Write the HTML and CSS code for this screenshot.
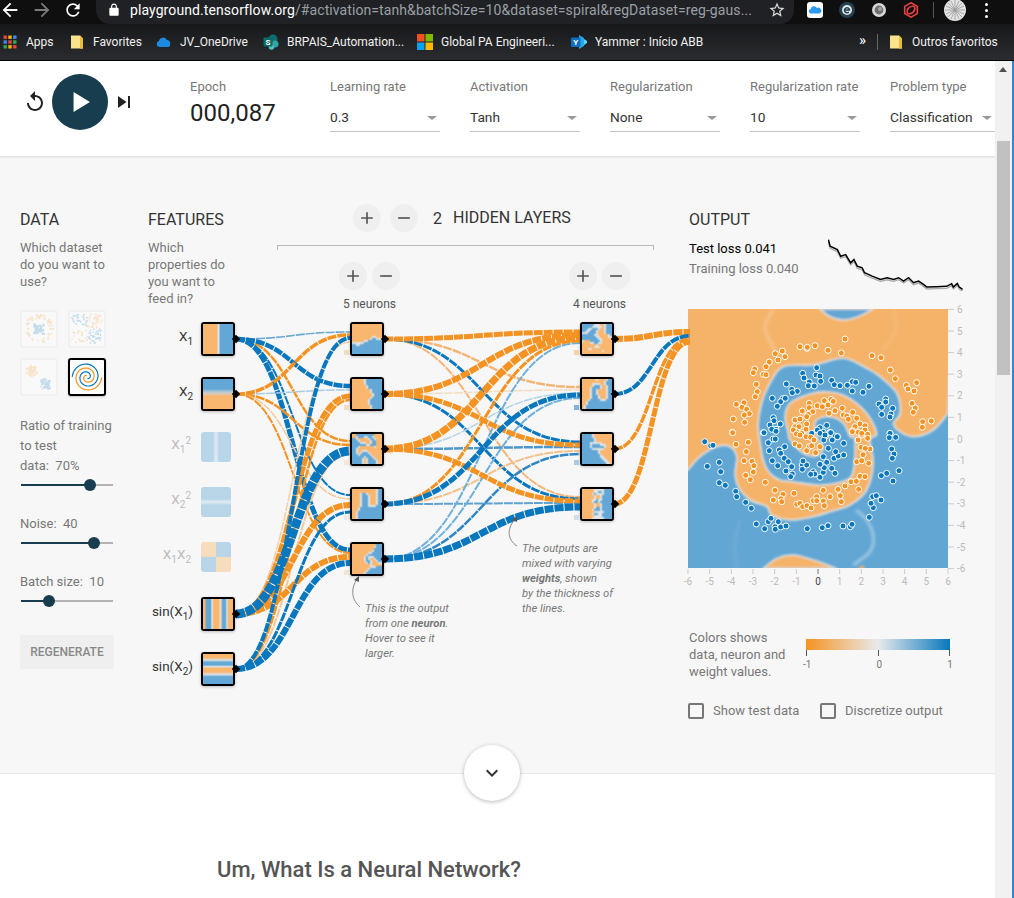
FILE: index.html
```html
<!DOCTYPE html>
<html lang="en">
<head>
<meta charset="utf-8">
<title>Tensorflow — Neural Network Playground</title>
<link rel="stylesheet" href="styles.css">
</head>
<body>
<div class="browser">
  <div class="toolbar">
    <svg class="tb-icon back" viewBox="0 0 24 24"><path d="M20 11H7.83l5.59-5.59L12 4l-8 8 8 8 1.41-1.41L7.83 13H20v-2z"/></svg>
    <svg class="tb-icon fwd" viewBox="0 0 24 24"><path d="M12 4l-1.41 1.41L16.17 11H4v2h12.17l-5.58 5.59L12 20l8-8z"/></svg>
    <svg class="tb-icon reload" viewBox="0 0 24 24"><path d="M17.65 6.35A7.958 7.958 0 0012 4c-4.42 0-7.99 3.58-7.99 8s3.57 8 7.99 8c3.73 0 6.84-2.55 7.73-6h-2.08A5.99 5.99 0 0112 18c-3.31 0-6-2.69-6-6s2.69-6 6-6c1.66 0 3.14.69 4.22 1.78L13 11h7V4l-2.35 2.35z"/></svg>
    <div class="omnibox">
      <svg class="lock" viewBox="0 0 24 24"><path d="M18 8h-1V6c0-2.76-2.24-5-5-5S7 3.24 7 6v2H6c-1.1 0-2 .9-2 2v10c0 1.1.9 2 2 2h12c1.1 0 2-.9 2-2V10c0-1.1-.9-2-2-2zM9 6c0-1.66 1.34-3 3-3s3 1.34 3 3v2H9V6z"/></svg>
      <span class="url"><b>playground.tensorflow.org</b>/#activation=tanh&amp;batchSize=10&amp;dataset=spiral&amp;regDataset=reg-gaus...</span>
      <svg class="star" viewBox="0 0 24 24"><path d="M22 9.24l-7.19-.62L12 2 9.19 8.63 2 9.24l5.46 4.73L5.82 21 12 17.27 18.18 21l-1.63-7.03L22 9.24zM12 15.4l-3.76 2.27 1-4.28-3.32-2.88 4.38-.38L12 6.1l1.71 4.04 4.38.38-3.32 2.88 1 4.28L12 15.4z"/></svg>
    </div>
    <div class="extensions">
      <svg class="ext" viewBox="0 0 16 16"><rect width="16" height="16" rx="3" fill="#fff"/><path d="M3.5 11.5a2.3 2.3 0 0 1 .2-4.5 3.4 3.4 0 0 1 6.3-1 2.8 2.8 0 0 1 2.5 5.5z" fill="#2f9bf0"/></svg>
      <svg class="ext" viewBox="0 0 16 16"><circle cx="8" cy="8" r="8" fill="#25404f"/><circle cx="8" cy="8" r="5" fill="#dfe6ea"/><path d="M5.5 8h5a2.5 2.5 0 1 0-.7 2" fill="none" stroke="#25404f" stroke-width="1.5"/></svg>
      <svg class="ext" viewBox="0 0 16 16"><circle cx="8" cy="8" r="7" fill="#d8d8d8"/><circle cx="8" cy="8" r="4.4" fill="#6d6d6d"/><circle cx="9" cy="7" r="2" fill="#a5a5a5"/></svg>
      <svg class="ext" viewBox="0 0 16 16"><g fill="none" stroke="#e8413f" stroke-width="1.6"><path d="M8 .8l6.3 3.6v7.200L8 15.200l-6.300-3.600V4.400z"/><path d="M4.500 11.500C3 7 7 3.500 11.500 4.500M11.500 4.500C13 9 9 12.500 4.500 11.500"/></g></svg>
      <span class="ext-sep"></span>
      <svg class="avatar" viewBox="0 0 22 22"><circle cx="11" cy="11" r="11" fill="#e3e3e3"/><g stroke="#9a9a9a" stroke-width=".8"><path d="M11 1v20M1 11h20M4 4l14 14M18 4L4 18M7 2l8 18M15 2L7 20M2 7l18 8M20 7L2 15"/></g></svg>
      <span class="menu-dots"><i></i><i></i><i></i></span>
    </div>
  </div>
  <div class="bookmarks">
    <div class="bm bm-apps"><svg class="bm-ic" viewBox="0 0 16 16"><g id="appsgrid"><rect x="1.5" y="1.5" width="3.4" height="3.4" fill="#e8453c"/><rect x="6.3" y="1.5" width="3.4" height="3.4" fill="#f4b400"/><rect x="11.1" y="1.5" width="3.4" height="3.4" fill="#4285f4"/><rect x="1.5" y="6.3" width="3.4" height="3.4" fill="#4285f4"/><rect x="6.3" y="6.3" width="3.4" height="3.4" fill="#e8453c"/><rect x="11.1" y="6.3" width="3.4" height="3.4" fill="#34a853"/><rect x="1.5" y="11.1" width="3.4" height="3.4" fill="#34a853"/><rect x="6.3" y="11.1" width="3.4" height="3.4" fill="#f4b400"/><rect x="11.1" y="11.1" width="3.4" height="3.4" fill="#e8453c"/></g></svg>Apps</div>
    <div class="bm bm-fav"><svg class="bm-ic" viewBox="0 0 16 16"><path d="M2 1.5h9l3 3v10H2z" fill="#fbe28c"/><path d="M11 1.5v13h3v-10z" fill="#e9bd3c"/></svg>Favorites</div>
    <div class="bm bm-drive"><svg class="bm-ic" viewBox="0 0 16 16"><path d="M3.5 13a3 3 0 0 1-.6-5.9 4.2 4.2 0 0 1 7.9-1.2 3.6 3.6 0 0 1 3.4 3.6A3.5 3.5 0 0 1 12.500 13z" fill="#1b8be0"/></svg>JV_OneDrive</div>
    <div class="bm bm-sp"><svg class="bm-ic" viewBox="0 0 16 16"><circle cx="10" cy="5" r="4.500" fill="#0f6d6d"/><circle cx="12" cy="10" r="3.500" fill="#31a5a5"/><circle cx="8.500" cy="13" r="2.800" fill="#4fc3c3"/><rect x="0.500" y="3.500" width="9" height="9" rx="1" fill="#0b6a6a"/><text class="sp-s" x="5" y="11">S</text></svg>BRPAIS_Automation...</div>
    <div class="bm bm-ms"><svg class="bm-ic" viewBox="0 0 16 16"><rect width="7.500" height="7.500" fill="#f25022"/><rect x="8.500" width="7.500" height="7.500" fill="#7fba00"/><rect y="8.500" width="7.500" height="7.500" fill="#00a4ef"/><rect x="8.500" y="8.500" width="7.500" height="7.500" fill="#ffb900"/></svg>Global PA Engineeri...</div>
    <div class="bm bm-yam"><svg class="bm-ic" viewBox="0 0 16 16"><path d="M8 1l5 3v8l-5 3z" fill="#28a8ea"/><path d="M13 5l3 2v2l-3 2z" fill="#50d9ff"/><rect y="3.500" width="9.500" height="9.500" rx="1" fill="#106ebe"/><text class="sp-s" x="4.700" y="11">Y</text></svg>Yammer : Início ABB</div>
    <div class="bm-right">
      <span class="chev-more">»</span>
      <span class="bm-sep"></span>
      <svg class="bm-ic" viewBox="0 0 16 16"><path d="M2 1.500h9l3 3v10H2z" fill="#fbe28c"/><path d="M11 1.500v13h3v-10z" fill="#e9bd3c"/></svg>
      <span class="bm-other">Outros favoritos</span>
    </div>
  </div>
</div>

<div class="viewport">
  <div class="page">
    <header class="controls">
      <div class="transport">
        <svg class="tr-icon" viewBox="0 0 24 24"><path d="M12 5V1L7 6l5 5V7c3.310 0 6 2.690 6 6s-2.690 6-6 6-6-2.690-6-6H4c0 4.420 3.580 8 8 8s8-3.580 8-8-3.580-8-8-8z"/></svg>
        <div class="play"><svg viewBox="0 0 24 24"><path d="M6.500 3.500v17l14-8.500z"/></svg></div>
        <svg class="tr-icon" viewBox="0 0 24 24"><path d="M6 18l8.500-6L6 6v12zM16 6v12h2V6h-2z"/></svg>
      </div>
      <div class="epoch"><div class="ctl-label">Epoch</div><div class="epoch-val">000,087</div></div>
      <div class="select"><div class="ctl-label">Learning rate</div><div class="select-val">0.3<i class="caret"></i></div></div>
      <div class="select"><div class="ctl-label">Activation</div><div class="select-val">Tanh<i class="caret"></i></div></div>
      <div class="select"><div class="ctl-label">Regularization</div><div class="select-val">None<i class="caret"></i></div></div>
      <div class="select"><div class="ctl-label">Regularization rate</div><div class="select-val">10<i class="caret"></i></div></div>
      <div class="select select-last"><div class="ctl-label">Problem type</div><div class="select-val">Classification<i class="caret"></i></div></div>
    </header>

    <main class="workspace">
      <section class="col-data">
        <h4>Data</h4>
        <p class="desc">Which dataset<br>do you want to<br>use?</p>
        <div class="datasets">
          <div class="dataset" id="ds-circle"></div>
          <div class="dataset" id="ds-xor"></div>
          <div class="dataset" id="ds-gauss"></div>
          <div class="dataset selected" id="ds-spiral"></div>
        </div>
        <div class="param first">Ratio of training<br>to test<br>data:&nbsp; 70%</div>
        <div class="slider"><span class="fill fill-ratio"></span><span class="thumb thumb-ratio"></span></div>
        <div class="param">Noise:&nbsp; 40</div>
        <div class="slider"><span class="fill fill-noise"></span><span class="thumb thumb-noise"></span></div>
        <div class="param">Batch size:&nbsp; 10</div>
        <div class="slider"><span class="fill fill-batch"></span><span class="thumb thumb-batch"></span></div>
        <button class="regen">REGENERATE</button>
      </section>

      <section class="col-net" id="net">
        <svg class="links" id="links" viewBox="148 156 547 616"></svg>
        <div class="col-features">
          <h4>Features</h4>
          <p class="desc">Which<br>properties do<br>you want to<br>feed in?</p>
        </div>
        <div class="col-hidden">
          <div class="hidden-head">
            <button class="round"><svg viewBox="0 0 24 24"><path d="M19 13h-6v6h-2v-6H5v-2h6V5h2v6h6v2z"/></svg></button>
            <button class="round"><svg viewBox="0 0 24 24"><path d="M19 13H5v-2h14v2z"/></svg></button>
            <span class="hl-num">2</span><span class="hl-txt">HIDDEN LAYERS</span>
          </div>
          <div class="bracket"></div>
          <div class="layers">
            <div class="layer">
              <div class="layer-btns">
                <button class="round"><svg viewBox="0 0 24 24"><path d="M19 13h-6v6h-2v-6H5v-2h6V5h2v6h6v2z"/></svg></button>
                <button class="round"><svg viewBox="0 0 24 24"><path d="M19 13H5v-2h14v2z"/></svg></button>
              </div>
              <div class="neurons">5 neurons</div>
            </div>
            <div class="layer">
              <div class="layer-btns">
                <button class="round"><svg viewBox="0 0 24 24"><path d="M19 13h-6v6h-2v-6H5v-2h6V5h2v6h6v2z"/></svg></button>
                <button class="round"><svg viewBox="0 0 24 24"><path d="M19 13H5v-2h14v2z"/></svg></button>
              </div>
              <div class="neurons">4 neurons</div>
            </div>
          </div>
        </div>
        <p class="note note-neuron">This is the output<br>from one <b>neuron</b>.<br>Hover to see it<br>larger.</p>
        <p class="note note-weights">The outputs are<br>mixed with varying<br><b>weights</b>, shown<br>by the thickness of<br>the lines.</p>
      </section>

      <section class="col-output">
        <h4>Output</h4>
        <div class="loss">
          <div class="loss-text">
            <div class="loss-test">Test loss 0.041</div>
            <div class="loss-train">Training loss 0.040</div>
          </div>
          <svg class="loss-chart" id="losschart" viewBox="443 120 405 160"></svg>
        </div>
        <svg class="heat" id="heat" viewBox="0 0 290 285"></svg>
        <div class="legend">
          <div class="legend-text">Colors shows<br>data, neuron and<br>weight values.</div>
          <div class="scale">
            <div class="scale-bar"></div>
            <div class="scale-ticks"><span>-1</span><span>0</span><span>1</span></div>
          </div>
        </div>
        <div class="checks">
          <label class="check"><i class="box"></i>Show test data</label>
          <label class="check"><i class="box"></i>Discretize output</label>
        </div>
      </section>
    </main>

    <section class="article">
      <button class="more"><svg viewBox="0 0 24 24"><path d="M7.410 8.590L12 13.170l4.590-4.580L18 10l-6 6-6-6z"/></svg></button>
      <h2>Um, What Is a Neural Network?</h2>
    </section>
  </div>
  <div class="scrollbar"><i class="sb-up"></i><i class="sb-thumb"></i></div>
</div>
<script src="script.js"></script>
</body>
</html>
```
FILE: styles.css
```css
* { box-sizing: border-box; }
html, body { margin: 0; height: 898px; overflow: hidden; }
body { font-family: Roboto, "Liberation Sans", sans-serif; color: #333; background: #fff; width: 1014px; }

/* browser chrome */
.browser { height: 61px; background: #202124; border-bottom: 1px solid #000; }
.toolbar { height: 24px; display: flex; align-items: flex-start; background: #0f0f10; }
.tb-icon { width: 22px; height: 22px; margin-top: -1px; fill: #fff; flex: none; }
.back { margin-left: -1px; }
.fwd { margin-left: 10px; fill: #7c7c7c; }
.reload { margin-left: 10px; width: 20px; height: 20px; margin-top: 0; }
.omnibox { margin-left: 13px; width: 698px; height: 24px; background: #202124; border-radius: 0 0 14px 14px; display: flex; align-items: center; padding: 0 8px 4px 11px; flex: none; }
.lock { width: 14px; height: 14px; fill: #fff; flex: none; }
.url { margin-left: 9px; font-size: 14px; color: #9aa0a6; white-space: nowrap; letter-spacing: .09px; flex: 1; overflow: hidden; }
.url b { color: #fff; font-weight: 400; }
.star { width: 18px; height: 18px; fill: #ddd; flex: none; }
.extensions { display: flex; align-items: center; height: 20px; padding-left: 13px; flex: 1; }
.ext { width: 16px; height: 16px; margin-right: 16px; flex: none; }
.ext-sep { width: 1px; height: 16px; background: #555; margin: 0 10px 0 -2px; }
.avatar { width: 22px; height: 22px; flex: none; }
.menu-dots { display: flex; flex-direction: column; gap: 3px; margin-left: 19px; }
.menu-dots i { width: 3px; height: 3px; background: #fff; border-radius: 50%; }

.bookmarks { height: 36px; display: flex; align-items: center; padding-left: 2px; background: linear-gradient(#17181a, #2b2c2f); font-size: 12px; color: #f1f1f1; }
.bm { display: flex; align-items: center; white-space: nowrap; flex: none; }
.bm-ic { width: 16px; height: 16px; flex: none; margin-right: 8px; }
.bm-apps { width: 67px; }
.bm-fav { width: 87px; }
.bm-drive { width: 107px; }
.bm-sp, .bm-ms { width: 154px; }
.bm-yam { width: 288px; }
.sp-s { font-size: 8px; font-weight: 700; fill: #fff; text-anchor: middle; }
.bm-right { display: flex; align-items: center; flex: none; }
.chev-more { width: 18px; font-size: 15px; color: #fff; line-height: 1; margin-top: -3px; }
.bm-sep { width: 1px; height: 16px; background: #666; margin-right: 10px; }
.bm-other { white-space: nowrap; }

/* page */
.viewport { display: flex; height: 837px; }
.page { width: 995px; flex: none; overflow: hidden; }
.scrollbar { flex: 1; position: relative; background: #f1f1f1; border-right: 2px solid #2b88d8; }
.sb-up { position: absolute; left: 4px; top: 6px; border: 4px solid transparent; border-top: 0; border-bottom: 5px solid #505050; }
.sb-thumb { position: absolute; left: 2px; top: 80px; width: 13px; height: 234px; background: #c1c1c1; }

.controls { height: 96px; display: flex; align-items: flex-start; padding: 17px 0 0 23px; background: #fff; border-bottom: 1px solid #e3e3e3; box-shadow: 0 1px 2px rgba(0,0,0,.06); position: relative; white-space: nowrap; overflow: hidden; }
.transport { display: flex; align-items: center; width: 167px; margin-top: -4px; flex: none; }
.tr-icon { width: 24px; height: 24px; fill: #222; flex: none; }
.play { width: 56px; height: 56px; border-radius: 50%; background: #183d4e; margin: 0 4px 0 5px; display: flex; align-items: center; justify-content: center; flex: none; }
.play svg { width: 28px; height: 28px; fill: #fff; }
.epoch { width: 140px; flex: none; }
.ctl-label { font-size: 13px; line-height: 17px; color: #777; }
.epoch-val { font-size: 24px; line-height: 28px; color: #222; margin-top: 4px; }
.select { width: 110px; margin-right: 30px; flex: none; }
.select-last { margin-right: 0; width: 105px; }
.select-val { position: relative; font-size: 13.7px; height: 28px; line-height: 26px; color: #333; margin-top: 9px; border-bottom: 1px solid #c4c4c4; }
.caret { position: absolute; right: 3px; top: 12px; border: 5px solid transparent; border-top: 4px solid #999; border-bottom: 0; }

.workspace { height: 617px; display: flex; background: #f7f7f7; padding: 53px 0 0 20px; border-bottom: 1px solid #e7e7e7; }
h4 { margin: 0; font-size: 16px; line-height: 19px; font-weight: 400; text-transform: uppercase; color: #333; }
.desc { margin: 10px 0 0; font-size: 13px; line-height: 17px; color: #777; }

.col-data { width: 128px; flex: none; }
.datasets { display: grid; grid-template-columns: 38px 38px; gap: 10px; margin-top: 20px; }
.dataset { width: 38px; height: 38px; background: #f9f9f9; border: 2px solid #f1f1f1; border-radius: 3px; }
.dataset svg { display: block; width: 100%; height: 100%; opacity: .22; }
.dataset.selected { border-color: #000; background: #fff; box-shadow: 0 1px 2px rgba(0,0,0,.2); }
.dataset.selected svg { opacity: 1; }
.param { font-size: 13px; line-height: 20px; color: #777; margin-top: 23px; }
.param.first { margin-top: 20px; }
.slider { position: relative; width: 92px; height: 12px; margin: 3px 0 0 1px; background: linear-gradient(#b3b3b3, #b3b3b3) center / 100% 2px no-repeat; }
.fill { position: absolute; left: 0; top: 5px; height: 2px; background: #183d4e; }
.thumb { position: absolute; top: 0; width: 12px; height: 12px; border-radius: 50%; background: #183d4e; }
.fill-ratio { width: 69px; } .thumb-ratio { left: 63px; }
.fill-noise { width: 73px; } .thumb-noise { left: 67px; }
.fill-batch { width: 28px; } .thumb-batch { left: 22px; }
.regen { display: block; margin-top: 28px; width: 94px; height: 34px; border: 0; border-radius: 3px; background: #efefef; color: #888; font: 500 12px Roboto, sans-serif; padding: 0; }

.col-net { width: 540px; flex: none; display: flex; position: relative; height: 560px; }
.links { position: absolute; left: 0; top: -54px; width: 547px; height: 616px; overflow: visible; }
.col-features { width: 129px; flex: none; position: relative; }
.col-hidden { width: 377px; flex: none; position: relative; margin-top: -6px; }
.hidden-head { display: flex; align-items: center; padding-left: 76px; height: 28px; }
.round { width: 28px; height: 28px; border: 0; border-radius: 50%; background: #efefef; padding: 4px; display: block; flex: none; }
.round svg { display: block; width: 20px; height: 20px; fill: #555; }
.hidden-head .round + .round { margin-left: 9px; }
.hl-num { margin-left: 15px; font-size: 16px; }
.hl-txt { margin-left: 11px; font-size: 16px; margin-top: -1px; }
.bracket { height: 5px; margin-top: 13px; border: 1px solid #bbb; border-bottom: 0; }
.layers { display: flex; margin-top: 12px; padding-left: 62px; }
.layer { width: 230px; flex: none; }
.layer-btns { display: flex; gap: 5px; width: 61px; }
.neurons { width: 61px; white-space: nowrap; display: flex; justify-content: center; font-size: 12px; line-height: 14px; color: #555; margin-top: 7px; }

.node { position: absolute; width: 34px; height: 34px; border: 2px solid #000; border-radius: 3px; background: #fff; box-shadow: 0 1px 3px rgba(0,0,0,.25); }
.node canvas { display: block; width: 30px; height: 30px; border-radius: 1px; }
.node::after { content: ""; position: absolute; right: -6px; top: 12px; width: 6px; height: 6px; background: #000; transform: rotate(45deg); }
.node.off { width: 30px; height: 30px; border: 0; box-shadow: none; background: none; }
.node.off::after { display: none; }
.thumbfill { width: 100%; height: 100%; border-radius: 1px; }
.node.off .thumbfill { border-radius: 3px; opacity: .42; }
.f-x1 { background: linear-gradient(90deg, #f9b66f 0 47%, #e8ddd0 50%, #dfe7ec 52%, #62a7d5 58% 100%); }
.f-x2 { background: linear-gradient(#62a7d5 0 32%, #bcc9d0 44%, #d9cdbb 50%, #f9b66f 56% 100%); }
.f-x1s { background: linear-gradient(90deg, #62a7d5 0 40%, #c5dcec 50%, #62a7d5 60% 100%); }
.f-x2s { background: linear-gradient(#62a7d5 0 40%, #c5dcec 50%, #62a7d5 60% 100%); }
.f-x1x2 { background: conic-gradient(#62a7d5 0 25%, #f9b66f 25% 50%, #62a7d5 50% 75%, #f9b66f 75% 100%); }
.f-s1 { background: linear-gradient(90deg, #f9b66f 0 5%, #62a7d5 12% 25%, #e2e6e6 30%, #f9b66f 36% 52%, #f3dfc3 58%, #62a7d5 66% 74%, #d5dfe4 80%, #f9b66f 86% 100%); }
.f-s2 { background: linear-gradient(#f9b66f 0 12%, #d9dfe2 20%, #62a7d5 28% 36%, #d9dfe2 42%, #f9b66f 48% 60%, #d9dfe2 68%, #62a7d5 76% 100%); }
.bias { position: absolute; left: -8px; bottom: -1px; width: 5px; height: 5px; }
.flabel { position: absolute; right: calc(100% + 10px); top: 50%; transform: translateY(calc(-50% - 3px)); font-size: 13.5px; line-height: 16px; color: #333; white-space: nowrap; }
.off .flabel { color: #bbb; }
.flabel sub, .flabel sup { font-size: 10px; line-height: 0; }

.note { position: absolute; margin: 0; font-size: 11.2px; line-height: 15px; font-style: italic; color: #777; white-space: nowrap; }
.note b { font-weight: 700; }
.note-neuron { left: 217px; top: 391px; }
.note-weights { left: 374px; top: 331px; }

.col-output { width: 307px; flex: none; padding-left: 1px; }
.loss { display: flex; height: 70px; margin-top: 10px; }
.loss-text { width: 139px; font-size: 13px; line-height: 20px; flex: none; }
.loss-test { color: #000; }
.loss-train { color: #777; }
.loss-chart { width: 135px; height: 53px; flex: none; fill: none; margin-top: -1px; }
.heat { display: block; width: 290px; height: 285px; margin-left: -1px; overflow: visible; }
.ax { font-size: 10px; fill: #bbb; font-family: Roboto, sans-serif; }
.ax.zero { fill: #444; }
.legend { display: flex; margin-top: 35px; }
.legend-text { width: 117px; font-size: 13px; line-height: 17px; color: #777; flex: none; }
.scale { width: 144px; margin-top: 10px; flex: none; }
.scale-bar { height: 11px; background: linear-gradient(90deg, #f59322, #e8eaeb 50%, #0877bd); }
.scale-ticks { display: flex; justify-content: space-between; font-size: 10px; line-height: 12px; color: #777; height: 20px; padding-top: 9px; margin: 0 -3px; background: linear-gradient(#555, #555) 3px 0 / 1px 6px no-repeat, linear-gradient(#555, #555) center 0 / 1px 6px no-repeat, linear-gradient(#555, #555) calc(100% - 3px) 0 / 1px 6px no-repeat; }
.checks { display: flex; margin-top: 23px; }
.check { display: flex; align-items: center; font-size: 13px; line-height: 16px; color: #777; width: 132px; flex: none; white-space: nowrap; }
.box { width: 16px; height: 16px; border: 2px solid #777; border-radius: 2px; margin-right: 9px; flex: none; margin-left: -1px; }

.article { position: relative; background: #fff; height: 125px; padding-top: 83px; }
.more { position: absolute; left: 464px; top: -29px; width: 56px; height: 56px; border: 0; border-radius: 50%; background: #fff; box-shadow: 0 1px 4px rgba(0,0,0,.28); padding: 16px; }
.more svg { display: block; width: 24px; height: 24px; fill: #333; }
.article h2 { margin: 0; width: 738px; text-align: center; font-size: 22px; line-height: 26px; font-weight: 500; color: #555; }
```
FILE: script.js
```js
(function () {
  var NS = 'http://www.w3.org/2000/svg';
  var B = '#0877bd', O = '#f59322';
  var OFILL = '#f5b36b', BFILL = '#62a6d4';

  function el(tag, attrs, parent) {
    var e = document.createElementNS(NS, tag);
    for (var k in attrs) e.setAttribute(k, attrs[k]);
    if (parent) parent.appendChild(e);
    return e;
  }
  function smooth(pts) {
    var d = 'M' + pts[0][0].toFixed(1) + ' ' + pts[0][1].toFixed(1);
    for (var i = 0; i < pts.length - 1; i++) {
      var p0 = pts[i - 1] || pts[i], p1 = pts[i], p2 = pts[i + 1], p3 = pts[i + 2] || p2;
      d += 'C' + (p1[0] + (p2[0] - p0[0]) / 6).toFixed(1) + ' ' + (p1[1] + (p2[1] - p0[1]) / 6).toFixed(1) + ' ' +
        (p2[0] - (p3[0] - p1[0]) / 6).toFixed(1) + ' ' + (p2[1] - (p3[1] - p1[1]) / 6).toFixed(1) + ' ' +
        p2[0].toFixed(1) + ' ' + p2[1].toFixed(1);
    }
    return d;
  }

  /* ---------- network links ---------- */
  var links = document.getElementById('links');
  function link(x1, y1, x2, y2, color, w) {
    var mx = (x1 + x2) / 2;
    el('path', {
      d: 'M' + x1 + ' ' + y1 + 'C' + mx + ' ' + y1 + ' ' + mx + ' ' + y2 + ' ' + x2 + ' ' + y2,
      fill: 'none', stroke: color, 'stroke-width': w, 'stroke-dasharray': '9 1'
    }, links);
  }
  var S = { x1: 339, x2: 394, s1: 614, s2: 669 };
  [
    ['x1', 332, '#6aa9d4', 1.6], ['x1', 441, O, 2.5], ['x1', 495, B, 2], ['x1', 386, B, 4.5], ['x1', 550, B, 5],
    ['x2', 390, '#a9cbe2', 1.5], ['x2', 445, O, 2.5], ['x2', 499, '#f3c89b', 1.5], ['x2', 553, O, 2], ['x2', 335, O, 3.5],
    ['s1', 342, '#f3cfa6', 1.5], ['s2', 454, '#f3c89b', 2], ['s2', 400, O, 2.5],
    ['s1', 396, O, 5], ['s1', 505, O, 6], ['s1', 557, O, 6],
    ['s2', 512, B, 3], ['s2', 338, B, 4], ['s2', 563, B, 6], ['s1', 451, B, 9]
  ].forEach(function (l) { link(236, S[l[0]], 350, l[1], l[2], l[3]); });
  [
    [339, 387, '#f4b678', 2.5], [339, 497, '#f4b678', 2], [339, 442, B, 3],
    [394, 390, '#f3dcc2', 1.5], [394, 499, B, 3],
    [449, 393, '#b5d3e6', 1.5], [449, 447, '#4c97cb', 2.5],
    [504, 451, '#f4c08a', 2], [504, 503, '#5ea3d1', 2],
    [559, 343, '#6fb0db', 2], [559, 398, '#6fb0db', 2], [559, 454, '#2f86c2', 2.5],
    [504, 341, O, 3], [449, 501, O, 5], [394, 445, O, 5], [504, 395, B, 5],
    [339, 332, O, 5], [394, 335, O, 6], [449, 338, O, 7], [559, 507, B, 7]
  ].forEach(function (l) { link(384, l[0], 580, l[1], l[2], l[3]); });
  [[339, 332, O, 6], [394, 336, B, 4], [449, 339, O, 3.5], [504, 342, O, 5]].forEach(function (l) {
    link(614, l[0], 690, l[1], l[2], l[3]);
  });
  /* annotation arrows */
  function arrow(d, head) {
    el('path', { d: d, fill: 'none', stroke: '#888', 'stroke-width': 1 }, links);
    el('path', { d: head, fill: '#555' }, links);
  }
  arrow('M360 607C352 600 350 590 357 579', 'M359 576L354 580L359 582Z');
  arrow('M517 546C508 540 506 530 515 519', 'M517 516L512 520L517 522Z');

  /* ---------- nodes ---------- */
  var net = document.getElementById('net');
  function node(x, y, cls) {
    var n = document.createElement('div');
    n.className = 'node ' + (cls || '');
    n.style.left = (x - 148) + 'px';
    n.style.top = (y - 210) + 'px';
    net.appendChild(n);
    return n;
  }
  function label(n, html) {
    var l = document.createElement('div');
    l.className = 'flabel';
    l.innerHTML = html;
    n.appendChild(l);
  }
  [
    [201, 322, 'f-x1', 'X<sub>1</sub>', 0], [201, 377, 'f-x2', 'X<sub>2</sub>', 0],
    [201, 432, 'f-x1s', 'X<sub>1</sub><sup>2</sup>', 1], [201, 487, 'f-x2s', 'X<sub>2</sub><sup>2</sup>', 1],
    [201, 542, 'f-x1x2', 'X<sub>1</sub>X<sub>2</sub>', 1],
    [201, 597, 'f-s1', 'sin(X<sub>1</sub>)', 0], [201, 652, 'f-s2', 'sin(X<sub>2</sub>)', 0]
  ].forEach(function (f) {
    var n = node(f[0], f[1], f[4] ? 'off' : '');
    var t = document.createElement('div');
    t.className = 'thumbfill ' + f[2];
    n.appendChild(t);
    label(n, f[3]);
  });

  var COL = { o: '#f9b66f', b: '#62a7d5', w: '#dfe5e8' };
  function bitmap(n, rows) {
    var c = document.createElement('canvas');
    c.width = 15; c.height = 15;
    var g = c.getContext('2d');
    rows.forEach(function (r, y) {
      for (var x = 0; x < 15; x++) {
        g.fillStyle = COL[r[x]] || COL.b;
        g.fillRect(x, y, 1, 1);
      }
    });
    n.appendChild(c);
  }
  function bias(n, color) {
    var b = document.createElement('i');
    b.className = 'bias';
    b.style.background = color;
    n.appendChild(b);
  }
  var hidden = [
    [350, 322, '#f0dcc0', ['ooooooooooooooo','ooooooooooooooo','ooooooooooooooo','ooooooooooooooo','ooooooooooooooo','ooooooooooooooo','oooooooooowwooo','ooooooooowbbwww','oooooowwbbbbbbb','wwwwwwbbbbbbbbb','bbwwbbbbbbbbbbb','bbbbbbbbbbbbbbb','bbbbbbbbbbbbbbb','bbbbbbbbbbbbbbb','bbbbbbbbbbbbbbb']],
    [350, 377, '#f0dcc0', ['oooooowbbbbbbbb','oooooowbbbbbbbb','oooooowbbbbbbbb','ooooooowbbbbbbb','ooooooowbbbbbbb','ooooooooowbbbbb','ooooooooowbbbbb','oooooooooowbbbb','oooooooooowbbbb','ooooooooowbbbbb','oooooooowbbbbbb','oooooooowbbbbbb','oooooooowbbbbbb','ooooooooowbbbbb','ooooooooowbbbbb']],
    [350, 432, '#f2e6d8', ['oobbbbbbbbboooo','oowbbbwwbbwoooo','bbwooooowbbwooo','bbbwooooowbbooo','bbbbwwwoowbbooo','bbbbbbbwwbbbooo','bbbwooooooowooo','bbwoooooooooooo','bbwoowwwooooooo','bbwowbbbwoooooo','bbbwbbbbbwooooo','bbbbbbwbbbwoooo','bbbbbwowbbbwooo','bbbbbwowbbbbwoo','bbbbbwowbbbbwoo']],
    [350, 487, '#ebebe8', ['oooooooooooowbb','oooooooooooowbb','oooowbbwoooowbb','oooowbbbwooowbb','oooowbbbwooowbb','oooowbbbwooowbb','oooowbbbwooowbb','oooowbbbwooowbb','oooowbbbwwwwbbb','ooowbbbbbbbbbbb','ooowbbbbbbbbbbb','oowbbbbbbbbbbbb','oowbbbbbbbbbbbb','oowbbbbbbbbbbbb','oowbbbbbbbbbbbb']],
    [350, 542, '#f0e4d4', ['oooooooooooobbb','ooooooooooowbbb','ooooooooooobbbb','oooooooooowbbbb','oooooooowwbbbbb','ooooooowbbbbbbb','oooooowbwwwbbbb','oooooowbwoowbbb','oooooowbbwoowbb','ooooooowbwoooww','ooooooooowooooo','ooooooooowwwbbb','oooooooowbbbbbb','ooooooowbbbbbbb','oooooowbbbbbbbb']],
    [580, 322, '#f3d2a8', ['bbbbbbwwwoowbbb','bbbbbwwwwwowbbb','bbbwwbbbwoowbbb','bbwwbbbwooowbbb','wwwbbbbwooowbbb','bbbbbbwwooooowb','bbbbbbbwwooooww','bbbbbbbbwwooooo','wooobbbbbwooooo','oooowwbbwwooooo','ooooooowooooooo','oooooowwwoooooo','ooowwoooooooooo','oooooooooowoooo','ooooooooooooooo']],
    [580, 377, '#7fb5da', ['ooooooowoooowbb','ooooooooooowbbb','ooooowwwwoowbbb','ooooowbbbwoowbb','oooowbbbbwoowbb','oooowbbwoooowbb','oooowbbwoooowbb','oooowbbwoooowbb','oooowbbbwooowbb','oooowbbbwooowbb','ooowbbbbbwwwbbb','oowbbbbbbbbbbbb','oowbbbbbbbbbbbb','owbbbbbbbbbbbbb','owbbbbbbbbbbbbb']],
    [580, 432, '#a8cbe2', ['bbbbbwooooooooo','bbbbbwooooooooo','bbbbbbwoooooooo','bbbbbbwoooooooo','bbbbwwwwwwooooo','bbbbwbbbbwwwooo','bbbbwbbbbbbwooo','bbbbbwwwwwwoooo','bbbbbbbbwoooooo','bbbbbbbbwoooooo','bbbbbbbbbwooooo','bbbbbbbbbwwoooo','bbbbbbbbbbwwooo','bbbbbbbbbbbwwoo','bbbbbbbbbbbbwwo']],
    [580, 487, '#cfe0ec', ['oooooowwwwwbbbb','oooooowwbbwbbbb','ooooowbwwwwbbbb','oooooowoowbbbbb','oooooowoowbbbbb','ooooowwbwwbbbbb','ooooowbbwbbbbbb','oooooowoowbbbbb','oooooowoowbbbbb','oooooowbbwbbbbb','ooooowbbbwbbbbb','oooooowwwwwbbbb','ooooowbbwwbbbbb','oooooowwwwbbbbb','ooooowwwwwwbbbb']]
  ];
  hidden.forEach(function (h) {
    var n = node(h[0], h[1]);
    bitmap(n, h[3]);
    bias(n, h[2]);
  });

  /* ---------- output heatmap ---------- */
  var heat = document.getElementById('heat');
  function z8(p) { return [p[0] / 3 - 8, p[1] / 3 - 109]; }
  function z9(p) { return [p[0] / 3 - 8, p[1] / 3 + 121]; }
  var edge = [].concat(
    [[24,120],[60,80],[110,50],[150,50],[170,80],[165,130],[175,170],[210,210],[260,230],[275,255],[330,270],[400,260],[450,245],[510,225],[560,180],[580,100],[570,30]].map(z9),
    [[590,700],[560,640],[500,590],[440,575],[380,585],[330,610],[315,650],[325,700]].map(z8),
    [[330,30],[370,70],[410,78],[430,55],[415,30]].map(z9),
    [[405,690],[410,660],[450,650],[490,670],[510,710]].map(z8),
    [[522,20],[525,60],[520,120],[500,150],[420,165],[340,155],[300,150],[270,130],[250,90],[238,20]].map(z9),
    [[235,670],[245,610],[270,550],[310,500],[400,495],[490,475],[560,505],[600,530],[650,580],[660,640],[640,670],[660,695],[700,710],[760,690],[804,640]].map(z8)
  );
  var defs = el('defs', {}, heat);
  var cp = el('clipPath', { id: 'hc' }, defs);
  el('rect', { x: 0, y: 0, width: 260, height: 259 }, cp);
  var fl = el('filter', { id: 'soft', x: '-5%', y: '-5%', width: '110%', height: '110%' }, defs);
  el('feGaussianBlur', { stdDeviation: 1 }, fl);
  var fl2 = el('filter', { id: 'softer', x: '-20%', y: '-20%', width: '140%', height: '140%' }, defs);
  el('feGaussianBlur', { stdDeviation: 1.6 }, fl2);

  var clip = el('g', { 'clip-path': 'url(#hc)' }, heat);
  el('rect', { x: 0, y: 0, width: 260, height: 259, fill: BFILL }, clip);
  var sg = el('g', { filter: 'url(#soft)' }, clip);
  el('path', { d: smooth(edge) + 'L265 -5L-5 -5L-5 ' + edge[0][1] + 'Z', fill: OFILL, stroke: '#e2e4e2', 'stroke-width': 1.6 }, sg);
  el('path', { d: smooth([[420,327],[450,350],[490,360],[535,350],[580,327]].map(z8)) + 'Z', fill: BFILL, stroke: '#e2e4e2', 'stroke-width': 1.4 }, sg);
  el('path', { d: smooth([[250,415],[290,385],[340,375],[400,390],[470,415]].map(z9)) + 'Z', fill: OFILL, stroke: '#e2e4e2', 'stroke-width': 1.4 }, sg);
  el('path', { d: 'M' + z9([530,415]).join(' ') + 'L' + z9([552,405]).join(' ') + 'L' + z9([552,418]).join(' ') + 'Z', fill: OFILL }, sg);
  var fg = el('g', { filter: 'url(#softer)', fill: 'none', stroke: '#fff' }, clip);
  el('path', { d: smooth([[528,240],[560,270],[580,320],[570,365],[520,405]].map(z9)), 'stroke-opacity': .38, 'stroke-width': 3 }, fg);
  el('path', { d: smooth([[280,327],[255,385],[290,460]].map(z8)), 'stroke-opacity': .22, 'stroke-width': 3 }, fg);
  el('path', { d: smooth([[640,327],[648,390],[610,450]].map(z8)), 'stroke-opacity': .08, 'stroke-width': 3 }, fg);
  el('path', { d: smooth([[180,270],[165,340],[170,415]].map(z9)), stroke: '#8fbddc', 'stroke-opacity': .3, 'stroke-width': 3 }, fg);

  var orange8 = [[495,417],[360,440],[381,445],[382,442],[405,437],[444,451],[484,459],[576,467],[603,473],[286,461],[307,453],[315,470],[294,480],[268,486],[258,500],[224,507],[220,518],[250,523],[258,524],[631,510],[646,536],[679,556],[710,548],[684,567],[702,573],[229,553],[232,575],[226,590],[169,613],[192,608],[186,622],[200,628],[208,641],[193,645],[194,667],[160,657],[157,697],[696,610],[706,624],[700,637],[728,665],[754,663],[727,682],[388,610],[433,602],[453,598],[460,604],[412,617],[427,620],[444,615],[388,623],[367,633],[398,635],[385,643],[380,650],[345,660],[360,657],[380,672],[345,680],[357,680],[378,688],[350,695],[365,700],[465,632],[487,625],[447,640],[490,645],[500,648],[518,637],[505,658],[530,655],[540,672],[555,677],[525,680],[518,692],[535,697],[555,690],[545,705],[563,703],[340,690]];
  var blue8 = [[410,503],[368,520],[372,534],[408,525],[420,528],[422,544],[388,546],[385,557],[403,558],[455,541],[463,554],[480,557],[502,556],[517,545],[527,547],[517,573],[549,577],[567,559],[319,552],[335,568],[352,574],[337,578],[277,595],[308,596],[302,605],[316,595],[292,619],[597,612],[617,597],[617,606],[605,622],[638,625],[633,642],[630,651],[605,643],[280,653],[282,662],[301,672],[270,675],[288,688],[275,688],[250,698],[630,700],[420,683],[440,676],[412,690],[430,697],[450,697],[465,708],[473,710],[395,700],[437,708]];
  var blue9 = [[74,35],[92,47],[99,46],[82,109],[118,97],[122,125],[118,158],[136,166],[167,184],[170,200],[197,217],[214,235],[229,282],[265,275],[273,265],[295,275],[285,290],[286,298],[254,296],[302,291],[318,288],[382,296],[427,293],[444,287],[489,288],[511,290],[516,283],[568,262],[580,233],[573,220],[578,200],[589,197],[603,210],[657,122],[639,153],[620,130],[604,137],[635,57],[642,72],[637,85],[630,10],[628,23],[647,22],[252,8],[288,4],[279,27],[286,27],[265,38],[268,62],[314,50],[298,60],[302,70],[313,85],[277,92],[293,107],[325,95],[335,110],[318,123],[337,132],[332,140],[367,105],[367,118],[380,105],[369,93],[400,125],[404,132],[392,133],[420,142],[430,127],[433,113],[440,97],[430,80],[462,85],[475,78],[491,75],[467,65],[420,103],[455,115],[465,130],[491,40],[472,20],[457,30],[445,55],[431,30],[452,8],[420,10],[435,15]];
  var orange9 = [[158,8],[205,37],[168,43],[199,65],[192,92],[216,94],[222,107],[220,126],[197,136],[211,149],[256,157],[285,181],[309,193],[303,206],[280,210],[305,215],[342,190],[350,223],[360,220],[368,230],[381,227],[393,234],[400,212],[410,200],[410,212],[430,181],[430,213],[433,227],[450,200],[474,178],[481,197],[484,215],[495,168],[513,155],[529,154],[536,178],[540,139],[555,140],[566,100],[530,95],[545,92],[570,57],[549,74],[543,52],[556,55],[534,30],[563,25],[545,10],[349,12],[378,20],[392,22],[402,30],[420,50],[407,68],[388,50],[345,42],[358,48],[380,62],[395,47],[360,15],[517,5]];
  function dots(list, conv, color) {
    list.forEach(function (p) {
      var c = conv(p);
      el('circle', { cx: c[0].toFixed(1), cy: c[1].toFixed(1), r: 3, fill: color, stroke: '#fff', 'stroke-width': 1 }, heat);
    });
  }
  dots(blue8, z8, B); dots(orange8, z8, O); dots(blue9, z9, B); dots(orange9, z9, O);

  for (var i = -6; i <= 6; i++) {
    var yy = 130 - i * 21.6, xx = 130 + i * 21.67;
    el('line', { x1: 260, x2: 266, y1: yy, y2: yy, stroke: '#ccc' }, heat);
    el('line', { y1: 260, y2: 265, x1: xx, x2: xx, stroke: i === 0 ? '#777' : '#ccc' }, heat);
    var ty = el('text', { x: 269, y: yy + 3.5, 'class': 'ax' }, heat);
    ty.textContent = i;
    var tx = el('text', { x: xx, y: 275.5, 'text-anchor': 'middle', 'class': 'ax' + (i === 0 ? ' zero' : '') }, heat);
    tx.textContent = i;
  }

  /* ---------- loss chart ---------- */
  var chart = document.getElementById('losschart');
  var lossPts = [[443,125],[448,145],[470,155],[480,175],[495,170],[510,195],[520,185],[530,205],[545,210],[552,225],[575,235],[600,245],[620,240],[640,245],[655,240],[670,250],[685,240],[700,255],[715,250],[730,260],[740,268],[770,267],[800,266],[815,258],[820,268],[832,257],[838,268],[848,275]];
  function line(pts, stroke, w) {
    el('polyline', { points: pts.map(function (p) { return p.join(','); }).join(' '), stroke: stroke, 'stroke-width': w, fill: 'none' }, chart);
  }
  line(lossPts.map(function (p) { return [p[0], p[1] + 6]; }), '#aaa', 4);
  line(lossPts, '#000', 4.5);

  /* ---------- dataset thumbnails ---------- */
  var seed = 7;
  function rnd() { seed = (seed * 16807) % 2147483647; return seed / 2147483647; }
  function thumb(id) {
    return el('svg', { viewBox: '0 0 34 34' }, document.getElementById(id));
  }
  function dot(s, x, y, c) { el('circle', { cx: x, cy: y, r: .9, fill: c }, s); }
  var s1 = thumb('ds-circle');
  for (var a = 0; a < 70; a++) {
    var t = rnd() * 6.283, r = 10.5 + rnd() * 4;
    dot(s1, 17 + r * Math.cos(t), 17 + r * Math.sin(t), O);
    dot(s1, 17 + (rnd() - .5) * 10, 17 + (rnd() - .5) * 10, B);
  }
  var s2 = thumb('ds-xor');
  for (a = 0; a < 120; a++) {
    var px = 2 + rnd() * 30, py = 2 + rnd() * 30;
    dot(s2, px, py, (px - 17) * (py - 17) > 0 ? B : O);
  }
  var s3 = thumb('ds-gauss');
  for (a = 0; a < 60; a++) {
    dot(s3, 10 + (rnd() + rnd() - 1) * 7, 11 + (rnd() + rnd() - 1) * 6, O);
    dot(s3, 24 + (rnd() + rnd() - 1) * 6, 24 + (rnd() + rnd() - 1) * 6, B);
  }
  var s4 = thumb('ds-spiral');
  function spiral(phase, color) {
    var pts = [];
    for (var k = 0; k <= 70; k++) {
      var rr = 1.5 + k * 0.19, th = k / 70 * 10.7 + phase;
      pts.push((17 + rr * Math.cos(-th)).toFixed(1) + ',' + (17 + rr * Math.sin(-th)).toFixed(1));
    }
    el('polyline', { points: pts.join(' '), fill: 'none', stroke: color, 'stroke-width': 1.2 }, s4);
  }
  spiral(5, B);
  spiral(5 + Math.PI, O);
})();
```
